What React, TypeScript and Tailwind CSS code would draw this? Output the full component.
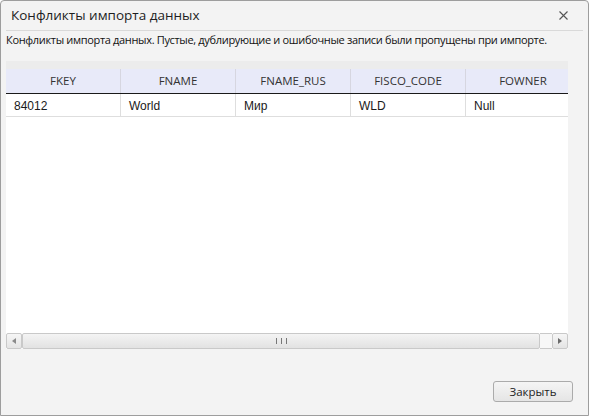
import React from "react";

const columns = ["FKEY", "FNAME", "FNAME_RUS", "FISCO_CODE", "FOWNER"];
const rows = [["84012", "World", "Мир", "WLD", "Null"]];

function ScrollBar() {
  return (
    <div className="flex h-[16px] items-stretch bg-white">
      <div className="flex w-[16px] items-center justify-center rounded-[2px] border border-[#c9c9c9] bg-gradient-to-b from-[#f6f6f6] to-[#e4e4e4]">
        <svg width="4" height="6" viewBox="0 0 4 6">
          <path d="M4 0 L0 3 L4 6 Z" fill="#8a8a8a" />
        </svg>
      </div>
      <div className="flex w-[518px] items-center justify-center gap-[2px] rounded-[2px] border border-[#c9c9c9] bg-gradient-to-b from-[#f4f4f4] to-[#e2e2e2]">
        <span className="h-[6px] w-px bg-[#777]" />
        <span className="ml-[2px] h-[6px] w-px bg-[#777]" />
        <span className="ml-[2px] h-[6px] w-px bg-[#777]" />
      </div>
      <div className="flex-1 border-y border-[#c9c9c9] bg-[#f7f7f7]" />
      <div className="flex w-[16px] items-center justify-center rounded-[2px] border border-[#c9c9c9] bg-gradient-to-b from-[#f6f6f6] to-[#e4e4e4]">
        <svg width="4" height="6" viewBox="0 0 4 6">
          <path d="M0 0 L4 3 L0 6 Z" fill="#6a6a6a" />
        </svg>
      </div>
    </div>
  );
}

export default function App() {
  return (
    <div className="h-[416px] w-[590px] bg-white">
      <div className="flex h-[416px] w-[589px] flex-col rounded-t-[4px] border border-[#9d9d9d] bg-[#f3f3f3] font-['Open_Sans','Noto_Sans',sans-serif]">
        {/* title bar */}
        <div className="flex h-[29px] items-center justify-between pl-[10px] pr-[20px]">
          <span className="text-[13.5px] text-[#1e1e1e]">Конфликты импорта данных</span>
          <svg width="9" height="9" viewBox="0 0 9 9">
            <path d="M0.5 0.5 L8.5 8.5 M8.5 0.5 L0.5 8.5" stroke="#555" strokeWidth="1.1" />
          </svg>
        </div>
        <div className="mx-[5px] h-px bg-[#d9d9d9]" />

        <div className="px-[5px] pt-[2px] text-[11px] leading-[14px] tracking-[-0.33px] text-[#111]">
          Конфликты импорта данных. Пустые, дублирующие и ошибочные записи были пропущены при импорте.
        </div>

        {/* grid */}
        <div className="ml-[5px] mt-[14px] flex h-[288px] w-[562px] flex-col bg-[#ececec] pt-[8px]">
          <div className="flex-1 overflow-hidden bg-white">
            <div className="flex h-[25px] w-max border-b border-[#1a1a1a] bg-[#e8eaf9]">
              {columns.map((c) => (
                <div
                  key={c}
                  className="flex w-[115px] items-center justify-center border-r border-[#d6d6e0] text-[11.5px] text-[#333]"
                >
                  {c}
                </div>
              ))}
            </div>
            {rows.map((r, i) => (
              <div key={i} className="flex h-[23px] w-max border-b border-[#dedede]">
                {r.map((v, j) => (
                  <div
                    key={j}
                    className="flex w-[115px] items-center border-r border-[#dedede] pl-[8px] pt-px font-['Liberation_Sans',Arial,sans-serif] text-[12px] text-[#1a1a1a]"
                  >
                    {v}
                  </div>
                ))}
              </div>
            ))}
          </div>
          <ScrollBar />
        </div>

        <div className="flex flex-1 items-start justify-end pr-[15px] pt-[32px]">
          <button className="h-[21px] w-[80px] rounded-[3px] border border-[#ababab] bg-gradient-to-b from-[#f5f5f5] to-[#e5e5e5] text-[11.5px] text-[#1e1e1e]">
            Закрыть
          </button>
        </div>
      </div>
    </div>
  );
}
